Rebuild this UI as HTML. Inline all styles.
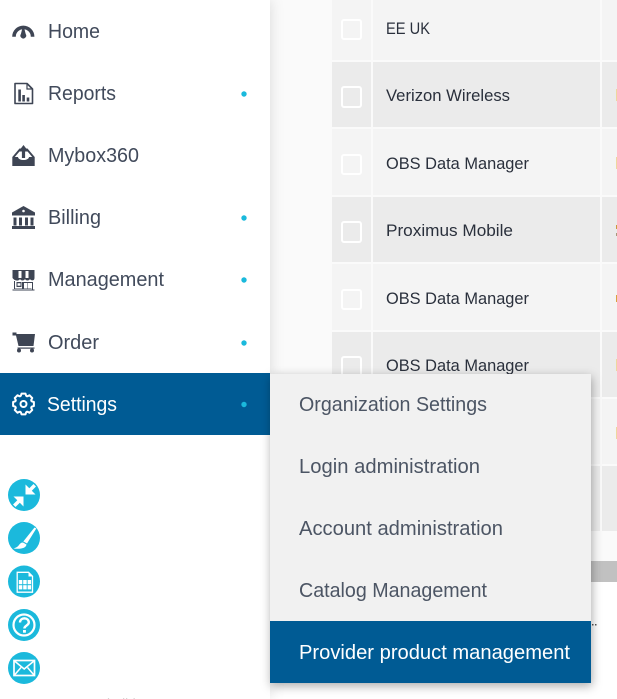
<!DOCTYPE html>
<html><head><meta charset="utf-8"><style>
html,body{margin:0;padding:0;background:#fff;width:617px;height:699px;overflow:hidden}
svg{display:block;position:absolute;left:0;top:0}
text{font-family:"Liberation Sans",sans-serif}
.n{font-size:20.6px;fill:#414a5b}
.t{font-size:16.6px;fill:#2a303c}
.m{font-size:20.6px;fill:#4c5564}
</style></head><body>
<svg width="617" height="699" viewBox="0 0 617 699" xmlns="http://www.w3.org/2000/svg">
<defs>
<filter id="s1" x="-20%" y="-5%" width="140%" height="110%"><feDropShadow dx="0" dy="0" stdDeviation="7" flood-color="#000" flood-opacity=".13"/></filter>
<filter id="s2" x="-10%" y="-10%" width="120%" height="125%"><feDropShadow dx="1" dy="3" stdDeviation="5" flood-color="#000" flood-opacity=".33"/></filter>
</defs>
<rect width="617" height="699" fill="#fff"/>
<rect x="270" y="0" width="347" height="561" fill="#fafafa"/>
<!-- table rows -->
<g fill="#f4f4f4">
<rect x="332" y="0" width="39" height="60"/><rect x="373" y="0" width="227" height="60"/><rect x="602" y="0" width="15" height="60"/>
<rect x="332" y="129" width="39" height="66"/><rect x="373" y="129" width="227" height="66"/><rect x="602" y="129" width="15" height="66"/>
<rect x="332" y="264" width="39" height="66"/><rect x="373" y="264" width="227" height="66"/><rect x="602" y="264" width="15" height="66"/>
<rect x="332" y="399" width="39" height="65"/><rect x="373" y="399" width="227" height="65"/><rect x="602" y="399" width="15" height="65"/>
</g>
<g fill="#ebebeb">
<rect x="332" y="62" width="39" height="65"/><rect x="373" y="62" width="227" height="65"/><rect x="602" y="62" width="15" height="65"/>
<rect x="332" y="197" width="39" height="65"/><rect x="373" y="197" width="227" height="65"/><rect x="602" y="197" width="15" height="65"/>
<rect x="332" y="332" width="39" height="65"/><rect x="373" y="332" width="227" height="65"/><rect x="602" y="332" width="15" height="65"/>
<rect x="332" y="466" width="39" height="65"/><rect x="373" y="466" width="227" height="65"/><rect x="602" y="466" width="15" height="65"/>
</g>
<!-- checkboxes -->
<g fill="none" stroke="#fff" stroke-width="2">
<rect x="342" y="20" width="19" height="19" rx="2"/>
<rect x="342" y="87" width="19" height="20" rx="2"/>
<rect x="342" y="155" width="19" height="19" rx="2"/>
<rect x="342" y="222" width="19" height="20" rx="2"/>
<rect x="342" y="290" width="19" height="19" rx="2"/>
<rect x="342" y="357" width="19" height="20" rx="2"/>
</g>
<!-- table text -->
<text class="t" x="386" y="34" textLength="44" lengthAdjust="spacingAndGlyphs">EE UK</text>
<text class="t" x="386" y="101" textLength="124" lengthAdjust="spacingAndGlyphs">Verizon Wireless</text>
<text class="t" x="386" y="169" textLength="143" lengthAdjust="spacingAndGlyphs">OBS Data Manager</text>
<text class="t" x="386" y="236" textLength="127" lengthAdjust="spacingAndGlyphs">Proximus Mobile</text>
<text class="t" x="386" y="304" textLength="143" lengthAdjust="spacingAndGlyphs">OBS Data Manager</text>
<text class="t" x="386" y="371" textLength="143" lengthAdjust="spacingAndGlyphs">OBS Data Manager</text>
<!-- right edge bits -->
<g fill="#eed79e">
<rect x="616" y="89" width="1" height="12"/><rect x="616" y="157" width="1" height="12"/>
<rect x="616" y="359" width="1" height="12"/><rect x="616" y="427" width="1" height="12"/>
</g>
<rect x="616" y="225" width="1" height="4" fill="#c99a3e"/><rect x="616" y="233" width="1" height="3" fill="#a8977a"/>
<rect x="616" y="295" width="1" height="7" fill="#d9a23f"/>
<!-- scrollbar -->
<rect x="270" y="561" width="347" height="21" fill="#c1c1c1"/>
<g fill="#555"><rect x="592" y="624" width="1.5" height="1.5"/><rect x="595" y="624" width="1.5" height="1.5"/></g>
<!-- sidebar -->
<rect x="0" y="0" width="270" height="699" fill="#fff" filter="url(#s1)"/>
<rect x="0" y="373" width="270" height="62" fill="#005b94"/>
<text class="n" x="48" y="38" textLength="52" lengthAdjust="spacingAndGlyphs">Home</text>
<text class="n" x="48" y="100" textLength="68" lengthAdjust="spacingAndGlyphs">Reports</text>
<text class="n" x="48" y="162" textLength="91" lengthAdjust="spacingAndGlyphs">Mybox360</text>
<text class="n" x="48" y="224" textLength="53" lengthAdjust="spacingAndGlyphs">Billing</text>
<text class="n" x="48" y="286" textLength="116" lengthAdjust="spacingAndGlyphs">Management</text>
<text class="n" x="48" y="349" textLength="51" lengthAdjust="spacingAndGlyphs">Order</text>
<text class="n" x="47" y="411" textLength="70" lengthAdjust="spacingAndGlyphs" style="fill:#fff">Settings</text>
<g fill="#1ab9dc">
<circle cx="244" cy="94" r="2.700"/><circle cx="244" cy="218" r="2.700"/><circle cx="244" cy="280" r="2.700"/><circle cx="244" cy="343" r="2.700"/><circle cx="244" cy="404.500" r="2.700"/>
</g>
<!-- nav icons -->
<g fill="#3e4554">
<!-- home gauge -->
<path d="M14 36.700A9.300 9.300 0 0 1 32.600 36.700" fill="none" stroke="#3e4554" stroke-width="3.600"/>
<path d="M22.700 27L23.900 27L25.700 34A2.900 2.900 0 1 1 20.900 34Z"/>
<!-- reports -->
<path d="M15 83.500H27L32.500 89V103.500H15Z" fill="none" stroke="#3e4554" stroke-width="1.600" stroke-linejoin="round"/>
<path d="M27 83.500V89H32.500" fill="none" stroke="#3e4554" stroke-width="1.200"/>
<rect x="18.300" y="89.500" width="2.600" height="12"/><rect x="22.300" y="95" width="2.600" height="6.500"/><rect x="26.700" y="97.500" width="2.600" height="4"/>
<!-- mybox -->
<path d="M12.300 166V157L19.500 148.500H21V150.500H20.300L14.800 157H18C18.500 161 28.500 161 29 157H32.200L26.700 150.500H26V148.500H27.500L34.700 157V166Z"/>
<path d="M23.500 145L28.500 151.500H25.100V158H21.900V151.500H18.500Z"/>
<!-- billing -->
<path d="M23.500 206L35 212.500V215.500H12V212.500Z"/>
<rect x="13.500" y="217.500" width="3" height="8"/><rect x="19" y="217.500" width="3" height="8"/><rect x="25" y="217.500" width="3" height="8"/><rect x="30.500" y="217.500" width="3" height="8"/>
<rect x="12" y="226" width="23" height="3"/>
<circle cx="23.500" cy="211" r="1.300" fill="#fff"/>
<!-- management -->
<path d="M12.500 270H34.500V278C34.500 281 31 281 30 279C29 281 26 281 25 279C24 281 21 281 20 279C19 281 15 281.500 12.500 278Z"/>
<g fill="#fff"><rect x="18.500" y="271" width="3" height="7"/><rect x="25.500" y="271" width="3" height="7"/></g>
<path d="M14 281H15V288.500H22V282H33V289.500H32V283H28V288.500H31.500V289H14ZM16.500 282H21.500V287H16.500ZM17.500 283.200V285.800H20.500V283.200ZM24 283H27.500V288.500H24Z" fill-rule="evenodd"/>
<rect x="12.500" y="289.500" width="22" height="1"/>
<!-- order -->
<path d="M16.500 334H35L33.500 346H18.500L16 335.500H12.500V332.500H16.500Z"/>
<rect x="17.500" y="347.500" width="17" height="1.200"/>
<circle cx="19" cy="350.500" r="2"/><circle cx="32" cy="350.500" r="2"/>
</g>
<!-- gear -->
<g transform="translate(23.500 404)" fill="none" stroke="#fff" stroke-width="2" stroke-linejoin="round" stroke-linecap="round">
<polyline points="-3.250,-7.850 -2.600,-8.400 -2,-10.400 2,-10.400 2.600,-8.400 3.250,-7.850"/>
<polyline transform="rotate(45)" points="-3.250,-7.850 -2.600,-8.400 -2,-10.400 2,-10.400 2.600,-8.400 3.250,-7.850"/>
<polyline transform="rotate(90)" points="-3.250,-7.850 -2.600,-8.400 -2,-10.400 2,-10.400 2.600,-8.400 3.250,-7.850"/>
<polyline transform="rotate(135)" points="-3.250,-7.850 -2.600,-8.400 -2,-10.400 2,-10.400 2.600,-8.400 3.250,-7.850"/>
<polyline transform="rotate(180)" points="-3.250,-7.850 -2.600,-8.400 -2,-10.400 2,-10.400 2.600,-8.400 3.250,-7.850"/>
<polyline transform="rotate(225)" points="-3.250,-7.850 -2.600,-8.400 -2,-10.400 2,-10.400 2.600,-8.400 3.250,-7.850"/>
<polyline transform="rotate(270)" points="-3.250,-7.850 -2.600,-8.400 -2,-10.400 2,-10.400 2.600,-8.400 3.250,-7.850"/>
<polyline transform="rotate(315)" points="-3.250,-7.850 -2.600,-8.400 -2,-10.400 2,-10.400 2.600,-8.400 3.250,-7.850"/>
<circle r="3"/>
</g>
<!-- tool circles -->
<g fill="#1bb9dc">
<circle cx="24" cy="495" r="16"/><circle cx="24" cy="538" r="16"/><circle cx="24" cy="581.500" r="16"/><circle cx="24" cy="625" r="16"/><circle cx="24" cy="668" r="16"/>
</g>
<g fill="#fff">
<!-- compress -->
<path d="M25.500 484.500V494.500H35.500L31.800 490.800L36 486.500L33.500 484L29.300 488.300Z"/>
<path d="M23.500 496.500V506.500L19.800 502.800L15.500 507L13 504.500L17.300 500.200L13.500 496.500Z"/>
<!-- brush -->
<path d="M34.500 527.500L36.300 528.500L27 543.500L23.300 541.500Z"/>
<path d="M23 542.500L26.500 544.500C26 548 21 549.500 13.500 548.500C16.500 547.500 18 546.500 19 545C20 543.500 21 542.500 23 542.500Z"/>
<!-- calc doc -->
<path d="M17.200 572.300H28.500L32.500 576.300V592.200H17.200Z" fill="none" stroke="#fff" stroke-width="1.300"/>
<path d="M28.500 572.500V576.500H32.500Z"/>
<rect x="18.800" y="580" width="3.500" height="4.200"/><rect x="23.200" y="580" width="3.500" height="4.200"/><rect x="27.600" y="580" width="3.500" height="4.200"/>
<rect x="18.800" y="585.200" width="3.500" height="4.200"/><rect x="23.200" y="585.200" width="3.500" height="4.200"/><rect x="27.600" y="585.200" width="3.500" height="4.200"/>
</g>
<!-- question -->
<circle cx="24" cy="625" r="10.500" fill="none" stroke="#fff" stroke-width="2.200"/>
<path d="M20 622.500C20 617 28.800 617 28.800 622.500C28.800 625.500 24.400 625.500 24.400 628.500" fill="none" stroke="#fff" stroke-width="2.400"/>
<rect x="23" y="630" width="2.900" height="2.700" fill="#fff"/>
<!-- mail -->
<rect x="14" y="660.500" width="20.500" height="15" fill="none" stroke="#fff" stroke-width="1.700"/>
<path d="M14.500 661L24.200 669L34 661M14.500 675L21 667.500M34 675L27.500 667.500" fill="none" stroke="#fff" stroke-width="1.500"/>
<text x="107" y="708" font-size="13" fill="#aaa" textLength="55" lengthAdjust="spacingAndGlyphs">build 700</text>
<!-- submenu -->
<rect x="270" y="374" width="321" height="309" fill="#f1f1f1" filter="url(#s2)"/>
<rect x="270" y="621" width="321" height="62" fill="#005b94"/>
<text class="m" x="299" y="411" textLength="188" lengthAdjust="spacingAndGlyphs">Organization Settings</text>
<text class="m" x="299" y="473" textLength="181" lengthAdjust="spacingAndGlyphs">Login administration</text>
<text class="m" x="299" y="535" textLength="204" lengthAdjust="spacingAndGlyphs">Account administration</text>
<text class="m" x="299" y="597" textLength="188" lengthAdjust="spacingAndGlyphs">Catalog Management</text>
<text class="m" x="299" y="659" textLength="271" lengthAdjust="spacingAndGlyphs" style="fill:#fff">Provider product management</text>
</svg>
</body></html>
